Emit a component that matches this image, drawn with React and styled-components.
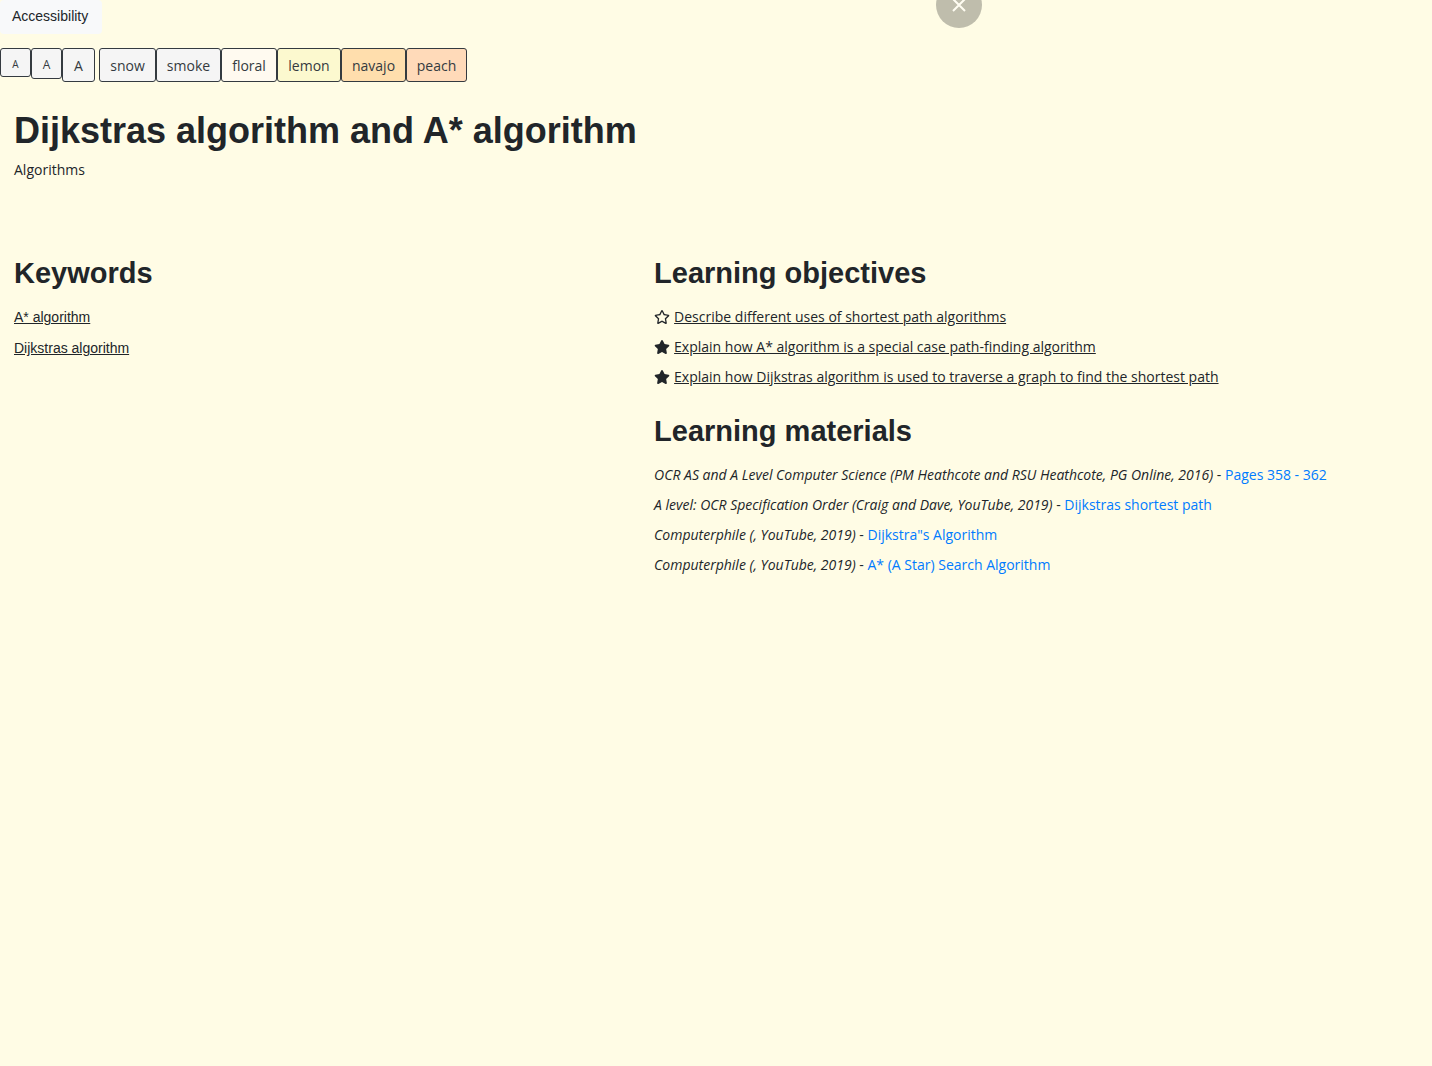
import React from "react";
import styled, { createGlobalStyle } from "styled-components";

const ui = `"Open Sans", "Noto Sans", sans-serif`;
const arial = `"Liberation Sans", Arial, sans-serif`;

const GlobalStyle = createGlobalStyle`
  *, *::before, *::after { box-sizing: border-box; }
  body {
    margin: 0;
    min-height: 100vh;
    background: #fffce5;
    color: #212529;
    font: 14px/22px ${ui};
  }
`;

const MenuButton = styled.button`
  display: block;
  min-width: 102px;
  height: 34px;
  padding: 0 12px 2px;
  border: 0;
  border-radius: 4px;
  background: #f8f9fa;
  color: #212529;
  font: 14px/22px ${arial};
  text-align: left;
`;

const Toolbar = styled.div`
  display: flex;
  flex-wrap: wrap;
  gap: 4px;
  margin-top: 14px;
`;

const Group = styled.div`
  display: flex;
  align-items: flex-start;
`;

const OptionButton = styled.button`
  min-width: ${(p) => p.$width}px;
  height: ${(p) => p.$height || 34}px;
  padding: 2px 0 0;
  border: 1px solid #343a40;
  border-radius: 3px;
  background: ${(p) => p.$color || "#f5f5f5"};
  color: #343a40;
  font: ${(p) => p.$size || 14}px/20px ${ui};
`;

const Header = styled.header`
  padding: 27px 14px 0;
`;

const Title = styled.h1`
  margin: 0 0 6px;
  font: bold 36px/44px ${arial};
`;

const Text = styled.p`
  margin: 0 0 8px;
`;

const Columns = styled.main`
  display: grid;
  grid-template-columns: 44.7% minmax(0, 1fr);
  margin-top: 75px;
`;

const Column = styled.div`
  padding: 0 14px;
`;

const Section = styled.section`
  margin-bottom: 26px;
`;

const Heading = styled.h2`
  margin: 0 0 16px;
  font: bold 29px/34px ${arial};
`;

const Keyword = styled.p`
  margin: 0 0 9px;
  font-family: ${arial};
`;

const PlainLink = styled.a`
  color: #212529;
  text-decoration: underline;
`;

const BlueLink = styled.a`
  color: #007bff;
  text-decoration: none;
`;

const Objective = styled(Text)`
  display: flex;
  align-items: center;
  gap: 4px;
`;

const StarIcon = styled.svg`
  flex: none;
  width: 16px;
  height: 14px;
`;

const CloseButton = styled.button`
  position: fixed;
  top: -18px;
  left: 67%;
  transform: translateX(-50%);
  display: grid;
  place-items: center;
  width: 46px;
  height: 46px;
  padding: 0;
  border: 0;
  border-radius: 50%;
  background: #bfbdac;
`;

const SOLID =
  "M259.3 17.8L194 150.2 47.9 171.5c-26.2 3.8-36.7 36.1-17.7 54.6l105.700 103-25 145.500c-4.500 26.300 23.200 46 46.400 33.700L288 439.600l130.700 68.700c23.200 12.200 50.900-7.400 46.400-33.700l-25-145.500 105.700-103c19-18.500 8.500-50.800-17.700-54.600L382 150.200 316.700 17.800c-11.700-23.600-45.600-23.900-57.400 0z";
const OUTLINE =
  "M528.1 171.5L382 150.2 316.700 17.800c-11.700-23.600-45.600-23.900-57.400 0L194 150.200 47.900 171.500c-26.200 3.800-36.700 36.100-17.700 54.600l105.700 103-25 145.500c-4.500 26.300 23.200 46 46.400 33.700L288 439.600l130.700 68.700c23.200 12.200 50.900-7.400 46.400-33.700l-25-145.500 105.700-103c19-18.500 8.500-50.800-17.700-54.600zM388.600 312.300l23.700 138.400L288 385.400l-124.300 65.300 23.700-138.400-100.600-98 139-20.200 62.200-126 62.200 126 139 20.200-100.600 98z";

const sizes = [
  { label: "small", width: 31, height: 29, size: 10 },
  { label: "medium", width: 31, height: 31, size: 12 },
  { label: "large", width: 33, height: 34, size: 14 },
];

const themes = [
  { name: "snow", width: 57, color: "#f5f5f5" },
  { name: "smoke", width: 65, color: "#f5f5f5" },
  { name: "floral", width: 56, color: "#fffaf0" },
  { name: "lemon", width: 64, color: "#fcf9cf" },
  { name: "navajo", width: 65, color: "#ffdead" },
  { name: "peach", width: 61, color: "#ffdab9" },
];

const objectives = [
  { text: "Describe different uses of shortest path algorithms", path: OUTLINE },
  { text: "Explain how A* algorithm is a special case path-finding algorithm", path: SOLID },
  {
    text: "Explain how Dijkstras algorithm is used to traverse a graph to find the shortest path",
    path: SOLID,
  },
];

const materials = [
  ["OCR AS and A Level Computer Science (PM Heathcote and RSU Heathcote, PG Online, 2016)", "Pages 358 - 362"],
  ["A level: OCR Specification Order (Craig and Dave, YouTube, 2019)", "Dijkstras shortest path"],
  ["Computerphile (, YouTube, 2019)", 'Dijkstra"s Algorithm'],
  ["Computerphile (, YouTube, 2019)", "A* (A Star) Search Algorithm"],
];

export default function App() {
  return (
    <>
      <GlobalStyle />
      <MenuButton type="button">Accessibility</MenuButton>
      <Toolbar>
        <Group>
          {sizes.map((s) => (
            <OptionButton key={s.label} type="button" aria-label={`A ${s.label}`} $width={s.width} $height={s.height} $size={s.size}>
              A
            </OptionButton>
          ))}
        </Group>
        <Group>
          {themes.map((t) => (
            <OptionButton key={t.name} type="button" $width={t.width} $color={t.color}>
              {t.name}
            </OptionButton>
          ))}
        </Group>
      </Toolbar>
      <Header>
        <Title>Dijkstras algorithm and A* algorithm</Title>
        <Text>Algorithms</Text>
      </Header>
      <Columns>
        <Column>
          <Heading>Keywords</Heading>
          {["A* algorithm", "Dijkstras algorithm"].map((k) => (
            <Keyword key={k}>
              <PlainLink href="#">{k}</PlainLink>
            </Keyword>
          ))}
        </Column>
        <Column>
          <Section>
            <Heading>Learning objectives</Heading>
            {objectives.map((o) => (
              <Objective key={o.text}>
                <StarIcon viewBox="0 0 576 512" fill="currentColor" aria-hidden="true">
                  <path d={o.path} />
                </StarIcon>
                <PlainLink href="#">{o.text}</PlainLink>
              </Objective>
            ))}
          </Section>
          <Section>
            <Heading>Learning materials</Heading>
            {materials.map(([source, link]) => (
              <Text key={link}>
                <em>{source}</em> - <BlueLink href="#">{link}</BlueLink>
              </Text>
            ))}
          </Section>
        </Column>
      </Columns>
      <CloseButton type="button" aria-label="Close">
        <svg width="14" height="14" viewBox="0 0 14 14" stroke="#fffdf2" strokeWidth="2" aria-hidden="true">
          <path d="M1 1L13 13M13 1L1 13" />
        </svg>
      </CloseButton>
    </>
  );
}
